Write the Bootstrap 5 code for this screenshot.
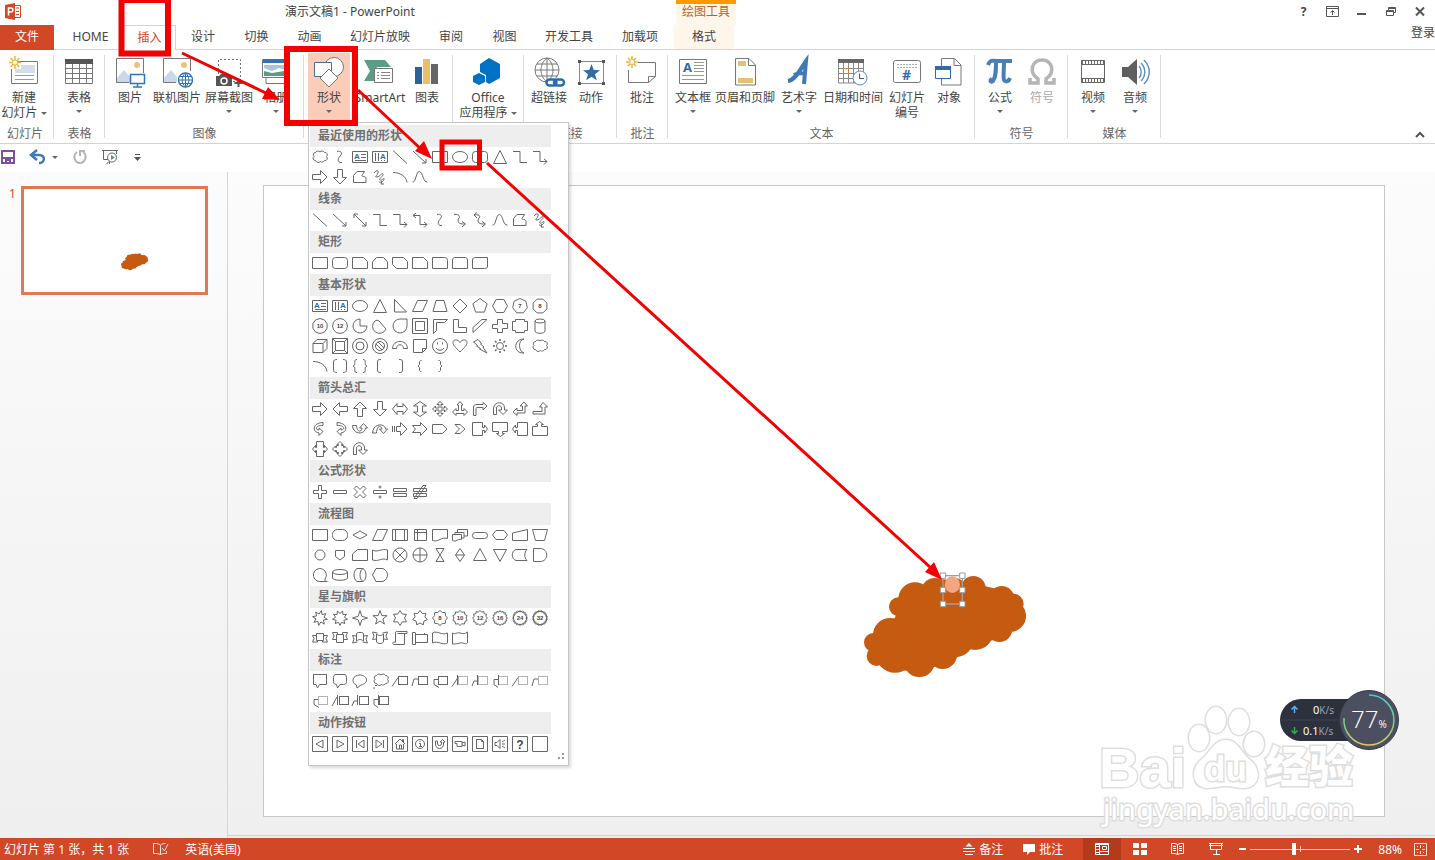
<!DOCTYPE html>
<html lang="zh-CN">
<head>
<meta charset="utf-8">
<meta name="viewport" content="width=device-width, initial-scale=1">
<title>演示文稿1 - PowerPoint</title>
<link href="https://cdn.jsdelivr.net/npm/bootstrap@5.3.0/dist/css/bootstrap.min.css" rel="stylesheet">
<style>
:root{--brand:#d24726;--line:#d4d4d4;--ink:#444}
body{font:12px/15px "Noto Sans","Noto Sans CJK SC",sans-serif;color:var(--ink);background:#fff;overflow:hidden}
button,.tab-link,.plain-link{font:inherit;color:inherit;background:none;border:0;padding:0;text-decoration:none}
svg{display:block;fill:none;overflow:visible}
.title-row{height:25px;padding-bottom:2px}
.app-logo{position:absolute;left:5px;top:3px}
.doc-title{padding-left:285px}
.ctx-head{width:60px;left:676px;background:#fef6ea;border-top:4px solid #fe9a00;color:#b8651b}
.win-set{margin-right:1px}
.win-btn{display:grid;place-items:center;width:29px;height:23px}
.tab-row{height:25px;border-bottom:1px solid var(--line)}
.tab-link{display:flex;align-items:center;justify-content:center;height:24px;padding-bottom:2px}
.tab-file{width:54px;height:25px;background:var(--brand);color:#fff}
.w-53{width:53px}.w-54{width:54px}.w-66{width:66px}.w-69{width:69px}.w-76{width:76px}.w-88{width:88px}
.tab-on{height:25px;background:#fff;border:1px solid var(--line);border-bottom:0;color:var(--brand)}
.tab-ctx{width:60px;margin-left:1px;background:#fef6ea}
.ribbon{height:94px;border-bottom:1px solid var(--line)}
.rgroup{position:relative;padding:3px 4px 0;height:91px}
.rgroup::after{content:"";position:absolute;right:0;top:5px;bottom:3px;width:1px;background:#dcdcdc}
.rlabel{color:#666;text-align:center}
.rbtn{display:flex;flex-direction:column;align-items:center;height:70px;padding-top:3px;white-space:nowrap;position:relative}
.rbtn svg{width:32px;height:32px;margin-bottom:2px;flex:none}
.i-38{width:38px}.i-42{width:42px}.i-46{width:46px}.i-48{width:48px}.i-52{width:52px}.i-62{width:62px}
.g-51{width:51px}.g-54{width:54px}.g-71{width:71px}.g-93{width:93px}.g-149{width:149px}.g-199{width:199px}.g-307{width:307px}
.dimmed{color:#aaa}
.caret{display:inline-block;border:3px solid transparent;border-top-color:#666;border-bottom:0;vertical-align:middle}
.caret-row{height:15px;line-height:12px}
.pressed{background:#fbcdb8}
.shape-menu{position:absolute;left:0;top:69px;width:261px;z-index:20;background:#fff;border:1px solid #c6c6c6;box-shadow:2px 2px 3px rgba(0,0,0,.15);padding:2px 17px 10px 1px;line-height:20px}
.menu-head{font-size:12px;font-weight:700;line-height:22px;height:22px;margin:0;padding-left:8px;background:#eee;color:#707070}
.menu-grid{display:grid;grid-template-columns:repeat(12,20px);grid-auto-rows:20px;padding-bottom:1px}
.menu-grid button{display:grid;place-items:center}
.menu-grid svg{width:16px;height:16px;stroke:#666;stroke-width:1}
.menu-grid text{stroke:none;fill:#444;font:700 6px "Liberation Sans",sans-serif;text-anchor:middle}
.menu-grid text.ltr{fill:#2e6da4;font-size:8px}
.menu-grid text.big{font-size:12px}
.quick{height:28px;padding-bottom:2px}
.work{background:linear-gradient(#fcfcfc,#efefef)}
.thumbs{width:228px;border-right:1px solid #d6d6d6;padding:14px 19px 0 9px;color:var(--brand)}
.thumb{width:187px;height:109px;border:3px solid #e2784f;background:#fff;position:relative}
.stage{padding:13px 50px 21px 35px}
.stage::after{content:"";position:absolute;left:0;right:0;bottom:2px;height:1px;background:#d0d0d0}
.slide{background:#fff;border:1px solid #c8c8c8}
.blob{position:absolute;left:51.4%;top:57.8%;width:210px;height:150px}
.thumb .blob{width:35px;height:25px}
.wmark{position:absolute;right:60px;bottom:8px;width:280px;height:130px;z-index:3;fill:#fff;stroke:#dedede;stroke-width:3;paint-order:stroke}
.meter{position:absolute;right:36px;bottom:88px;width:120px;height:60px;z-index:4}
.status{height:22px;background:var(--brand);color:#fff}
.view-btn{width:38px;height:22px;display:grid;place-items:center}
.view-on{background:#b5391b}
.st-gap{margin-right:20px}
.zoomer{appearance:none;width:100px;height:22px;margin:0;background:linear-gradient(#f6cfc3,#f6cfc3) center/100% 1px no-repeat,linear-gradient(#f6cfc3,#f6cfc3) center/1px 6px no-repeat}
.zoomer::-webkit-slider-thumb{appearance:none;width:4px;height:12px;background:#fff}
.marks{position:absolute;left:0;top:0;width:1435px;height:860px;z-index:40;pointer-events:none}
</style>
</head>
<body class="d-flex flex-column vh-100 position-relative">

<header>
  <div class="title-row d-flex align-items-center position-relative">
    <svg class="app-logo" width="16" height="17" viewBox="0 0 16 17"><path d="M0 2L10 0v17L0 15z" fill="#d24726"/><path d="M10 2.500h5.500v12H10" stroke="#d24726"/><path d="M11 5h3M11 8.500h3M11 11.500h3" stroke="#d24726"/><path d="M3.500 12.500V5H6c2.500 0 2.500 4 0 4H4" stroke="#fff" stroke-width="1.600"/></svg>
    <span class="doc-title">演示文稿1 - PowerPoint</span>
    <span class="ctx-head position-absolute top-0 h-100 text-center">绘图工具</span>
    <div class="win-set d-flex ms-auto">
      <button class="win-btn fw-bold" aria-label="帮助">?</button>
      <button class="win-btn" aria-label="功能区选项"><svg width="13" height="11" stroke="#555"><path d="M.5.500h12v10H.5zM.5 2.500h12M6.500 9V4.500M4.500 6.500l2-2 2 2"/></svg></button>
      <button class="win-btn" aria-label="最小化"><svg width="9" height="8"><path d="M0 6h9" stroke="#555" stroke-width="2"/></svg></button>
      <button class="win-btn" aria-label="还原"><svg width="10" height="9" stroke="#555"><path d="M.5 3.500h7v5h-7zM.5 4.500h7M2.500 3V.5h7v5H8M2.500 1.500h7"/></svg></button>
      <button class="win-btn" aria-label="关闭"><svg width="10" height="9" stroke="#555" stroke-width="2"><path d="M1 .500l8 8M9 .500l-8 8"/></svg></button>
    </div>
  </div>
  <nav class="tab-row d-flex">
    <a href="#" class="tab-link tab-file">文件</a>
    <a href="#" class="tab-link w-69 ps-1">HOME</a>
    <a href="#" class="tab-link tab-on w-53">插入</a>
    <a href="#" class="tab-link w-54">设计</a>
    <a href="#" class="tab-link w-53">切换</a>
    <a href="#" class="tab-link w-53">动画</a>
    <a href="#" class="tab-link w-88">幻灯片放映</a>
    <a href="#" class="tab-link w-54">审阅</a>
    <a href="#" class="tab-link w-53">视图</a>
    <a href="#" class="tab-link w-76">开发工具</a>
    <a href="#" class="tab-link w-66">加载项</a>
    <a href="#" class="tab-link tab-ctx">格式</a>
    <a href="#" class="plain-link ms-auto text-nowrap">登录</a>
  </nav>

  <div class="ribbon d-flex">
    <section class="rgroup g-54 d-flex flex-column justify-content-between px-0">
      <div><button class="rbtn i-48"><svg viewBox="0 0 32 32"><path d="M9 5.500h20.500v22h-26V13" stroke="#777"/><path d="M13 9h14v8H7v-4h6z" fill="#d5dde8"/><path d="M7 19.500h19M7 23.500h19" stroke="#999"/><path d="M7 0v13M1 6.500h12M2.500 2l9 9M11.500 2l-9 9" stroke="#eab839" stroke-width="1.500"/><circle cx="7" cy="6.500" r="2.500" fill="#fff" stroke="#eab839"/></svg><span>新建</span><span>幻灯片 <i class="caret"></i></span></button></div>
      <div class="rlabel pe-1">幻灯片</div>
    </section>
    <section class="rgroup g-51 d-flex flex-column justify-content-between">
      <div class="d-flex"><button class="rbtn i-42"><svg viewBox="0 0 32 32"><path d="M2 3h28v5H2z" fill="#555"/><path d="M2.500 8v19.500h27V8M2.500 12.500h27M2.500 17.500h27M2.500 22.500h27M9.500 8v19M16.500 8v19M23.500 8v19" stroke="#777"/></svg><span>表格</span><span class="caret-row"><i class="caret"></i></span></button></div>
      <div class="rlabel">表格</div>
    </section>
    <section class="rgroup g-199 d-flex flex-column justify-content-between">
      <div class="d-flex">
        <button class="rbtn i-42"><svg viewBox="0 0 32 32"><path d="M15 26.500H2.500v-24h27V17" stroke="#777"/><circle cx="23" cy="9" r="3" fill="#e8c57b"/><path d="M3 26V22l7-8 6 7v5z" fill="#c9d8ea"/><path d="M16.500 18.500h14v9h-14z" fill="#fff" stroke="#2f75b5" stroke-width="1.500"/><path d="M19 31h9M23.500 28v3" stroke="#2f75b5" stroke-width="1.500"/></svg><span>图片</span></button>
        <button class="rbtn i-52"><svg viewBox="0 0 32 32"><path d="M15 26.500H2.500v-24h27V15" stroke="#777"/><circle cx="23" cy="9" r="3" fill="#e8c57b"/><path d="M3 26V22l7-8 6 7v5z" fill="#c9d8ea"/><circle cx="24.500" cy="24" r="7" fill="#fff" stroke="#2f75b5" stroke-width="1.400"/><path d="M17.500 24h14M24.500 17v14M19 20.500h11M19 27.500h11M24.500 17c-4.500 4-4.500 10 0 14M24.500 17c4.500 4 4.500 10 0 14" stroke="#2f75b5"/></svg><span>联机图片</span></button>
        <button class="rbtn i-52"><svg viewBox="0 0 32 32"><path d="M5.500 18V3.500h22v22H19" stroke="#777" stroke-dasharray="2 2"/><path d="M3 20h3l2-2h6l2 2h3v10H3z" fill="#555"/><circle cx="11" cy="25" r="3" stroke="#fff" stroke-width="1.500"/><path d="M25.500 23v8M21.500 27h8" stroke="#555" stroke-width="2"/></svg><span>屏幕截图</span><span class="caret-row"><i class="caret"></i></span></button>
        <button class="rbtn i-42"><svg viewBox="0 0 32 32"><path d="M6 22v5.500h23.500V8H26" stroke="#777" fill="#fff"/><path d="M2.500 3.500h24v18h-24z" fill="#fff" stroke="#777"/><path d="M3 3h23v4H3z" fill="#2f75b5"/><path d="M4 9h21v5l-6-2-7 3-8-3z" fill="#a6c6e4"/><path d="M4 20v-5l8 2 12-2v5z" fill="#5c9c86"/></svg><span>相册</span><span class="caret-row"><i class="caret"></i></span></button>
      </div>
      <div class="rlabel">图像</div>
    </section>
    <section class="rgroup g-149 d-flex flex-column" aria-label="插图">
      <div class="d-flex">
        <div class="position-relative">
          <button class="rbtn pressed i-42" aria-expanded="true"><svg viewBox="0 0 32 32"><circle cx="21" cy="11" r="9.500" fill="#fff" stroke="#777"/><path d="M1.500 6.500h17v14h-17z" fill="#fff" stroke="#4a6f9c"/><path d="M16 13l9 9-9 9-9-9z" fill="#fff" stroke="#777"/></svg><span>形状</span><span class="caret-row"><i class="caret"></i></span></button>
          <div class="shape-menu" id="shapeMenu"></div>
        </div>
        <button class="rbtn i-52 ms-1"><svg viewBox="0 0 32 32"><path d="M0 4h21l6 7h-14l-3 7v7H0l6-10z" fill="#5c9c86"/><path d="M10.500 12.500h18v14h-18z" fill="#fff" stroke="#777"/><path d="M13 16.500h2M17 16.500h9M13 19.500h2M17 19.500h9M13 22.500h2M17 22.500h9" stroke="#888"/></svg><span>SmartArt</span></button>
        <button class="rbtn i-42"><svg viewBox="0 0 32 32"><path d="M4 11h7v17H4z" fill="#2f6196"/><path d="M12 3h7v25h-7z" fill="#e8bf6a"/><path d="M20 8h7v20h-7z" fill="#666"/></svg><span>图表</span></button>
      </div>
    </section>
    <section class="rgroup g-71 d-flex flex-column" aria-label="应用程序">
      <div class="d-flex"><button class="rbtn i-62"><svg viewBox="0 0 32 32"><path d="M17 2l11 6v14l-11 6-3-2v-7l-6-3V8z" fill="#0072c6"/><path d="M7 17l6 3v6l-6 3-6-3v-6z" fill="#0072c6"/></svg><span>Office</span><span>应用程序 <i class="caret"></i></span></button></div>
    </section>
    <section class="rgroup g-93 d-flex flex-column justify-content-between">
      <div class="d-flex">
        <button class="rbtn i-42"><svg viewBox="0 0 32 32"><g stroke="#777"><circle cx="14" cy="14" r="12"/><path d="M2 14h24M14 2v24M4 8h20M4 20h20M14 2C6 8 6 20 14 26M14 2c8 6 8 18 0 24"/></g><path d="M15 22.500h14v7H15z" fill="#fff"/><rect x="13.500" y="23.500" width="10" height="6" rx="3" stroke="#2f6ca8" stroke-width="2.500"/><rect x="21" y="23.500" width="10" height="6" rx="3" stroke="#2f6ca8" stroke-width="2.500"/></svg><span>超链接</span></button>
        <button class="rbtn i-42"><svg viewBox="0 0 32 32"><path d="M4.500 5.500h24v22h-24z" stroke="#888"/><path d="M3 4h3v3H3zM27 4h3v3h-3zM3 26h3v3H3zM27 26h3v3h-3z" fill="#555"/><path d="M16.500 8l2.300 6 6.200.300-5 3.900 1.800 6-5.300-3.500-5.300 3.500 1.800-6-5-3.900 6.200-.300z" fill="#2f6ca8"/></svg><span>动作</span></button>
      </div>
      <div class="rlabel">链接</div>
    </section>
    <section class="rgroup g-51 d-flex flex-column justify-content-between">
      <div class="d-flex"><button class="rbtn i-42"><svg viewBox="0 0 32 32"><path d="M12 6.500h17.500v14l-7 6h-20V14M29.500 20.500h-7v6" stroke="#777"/><path d="M6 0v12M0 6h12M2 2l8 8M10 2l-8 8" stroke="#eab839" stroke-width="1.500"/><circle cx="6" cy="6" r="2.500" fill="#fff" stroke="#eab839"/></svg><span>批注</span></button></div>
      <div class="rlabel">批注</div>
    </section>
    <section class="rgroup g-307 d-flex flex-column justify-content-between">
      <div class="d-flex">
        <button class="rbtn i-42"><svg viewBox="0 0 32 32"><path d="M2.500 3.500h27v24h-27z" stroke="#777"/><text x="6" y="16" font-size="13" font-weight="700" fill="#2f6ca8">A</text><path d="M17 6.500h10M17 9.500h10M17 12.500h10M17 15.500h10M5 19.500h22M5 23.500h22" stroke="#999"/></svg><span>文本框</span><span class="caret-row"><i class="caret"></i></span></button>
        <button class="rbtn i-62"><svg viewBox="0 0 32 32"><path d="M6.500 2.500H20l6.500 6.500v20h-20zM19.500 3v6.500H26" stroke="#777"/><path d="M9 5h8v5H9zM9 22h15v5H9z" fill="#e5c172"/></svg><span>页眉和页脚</span></button>
        <button class="rbtn i-46"><svg viewBox="0 0 32 32"><path d="M5 25C13 24 18 12 23 5l-2 23M11 19c4-2 8-2 12-1" stroke="#3f78b5" stroke-width="4"/></svg><span>艺术字</span><span class="caret-row"><i class="caret"></i></span></button>
        <button class="rbtn i-62"><svg viewBox="0 0 32 32"><path d="M1 3h26v4H1z" fill="#666"/><path d="M1.500 7v20h25V7M1.500 12.500h25M1.500 17.500h25M1.500 22.500h25M6.500 7v20M11.500 7v20M16.500 7v20M21.500 7v20" stroke="#888"/><path d="M6.500 12.500h5v5h-5z" stroke="#dd7a30"/><circle cx="23" cy="22" r="7" fill="#fff" stroke="#5b8fc0"/><path d="M22.500 17.500v5H27" stroke="#555"/></svg><span>日期和时间</span></button>
        <button class="rbtn i-46"><svg viewBox="0 0 32 32"><rect x="2.500" y="4.500" width="27" height="22" rx="2" stroke="#777"/><path d="M6 8.500h20M6 11.500h20" stroke="#aaa" stroke-dasharray="2 1"/><text x="11" y="24" font-size="14" font-weight="700" fill="#2f6ca8">#</text></svg><span>幻灯片</span><span>编号</span></button>
        <button class="rbtn i-38"><svg viewBox="0 0 32 32"><path d="M8.500 10V2.500h13l6.500 6.500v20H8.500v-6M21 3v6.500h7" stroke="#777"/><path d="M2.500 10.500h15v12h-15z" fill="#fff" stroke="#2f6ca8"/><path d="M2 10h16v4H2z" fill="#2f6ca8"/></svg><span>对象</span></button>
      </div>
      <div class="rlabel">文本</div>
    </section>
    <section class="rgroup g-93 d-flex flex-column justify-content-between">
      <div class="d-flex">
        <button class="rbtn i-42"><svg viewBox="0 0 32 32"><path d="M4 9c2-6 5-4 8-4h16M12 6c0 8 0 15-3 19-3 2-3-1-1-2M20 6c0 8-1 14 0 18 2 3 5 1 6-2" stroke="#4a7fb5" stroke-width="4"/></svg><span>公式</span><span class="caret-row"><i class="caret"></i></span></button>
        <button class="rbtn i-42 dimmed"><svg viewBox="0 0 32 32"><path d="M4 22v5h8v-4c-10-7-6-19 4-19s14 12 4 19v4h8v-5" stroke="#b5b5b5" stroke-width="3.500"/></svg><span>符号</span></button>
      </div>
      <div class="rlabel">符号</div>
    </section>
    <section class="rgroup g-93 d-flex flex-column justify-content-between">
      <div class="d-flex">
        <button class="rbtn i-42"><svg viewBox="0 0 32 32"><path d="M4.500 4.500h23v22h-23zM4.500 8.500h23M4.500 22.500h23" stroke="#666"/><path d="M5 6.500h22M5 24.500h22" stroke="#666" stroke-width="3" stroke-dasharray="1 2"/></svg><span>视频</span><span class="caret-row"><i class="caret"></i></span></button>
        <button class="rbtn i-42"><svg viewBox="0 0 32 32"><path d="M3 11h6l9-8v26l-9-8H3z" fill="#5f5f5f"/><path d="M20 10c3 3 3 9 0 12M22 7c5 5 5 13 0 18M25 4c7 7 7 17 0 24" stroke="#5b8fc0" stroke-width="1.400"/></svg><span>音频</span><span class="caret-row"><i class="caret"></i></span></button>
      </div>
      <div class="rlabel">媒体</div>
    </section>
    <button class="ms-auto me-1 align-self-end pb-1 px-1" aria-label="折叠功能区"><svg width="12" height="8"><path d="M1 6l4-4 4 4" stroke="#555" stroke-width="2"/></svg></button>
  </div>
</header>

<div class="quick d-flex align-items-center gap-3">
  <button aria-label="保存"><svg width="16" height="16"><path d="M2 2h12v12H2zM2 9h12" stroke="#7d4f9e" stroke-width="2"/><path d="M6 14v-3h4v3" stroke="#7d4f9e" stroke-width="2"/></svg></button>
  <button aria-label="撤消"><span class="d-flex align-items-center gap-1"><svg width="16" height="16"><path d="M-1 6h8c7 0 6 8 0 8" stroke="#3f78b5" stroke-width="2.500"/><path d="M5 1L-1 6l6 5" stroke="#3f78b5" stroke-width="2.500"/></svg><i class="caret"></i></span></button>
  <button aria-label="重复"><svg width="12" height="16"><path d="M3 3C-2 7 1 14 6 14S14 6 9 3" stroke="#b4b4b4" stroke-width="2"/><path d="M6 7V2h5" stroke="#b4b4b4" stroke-width="2"/></svg></button>
  <button aria-label="从头开始放映"><svg width="16" height="16" stroke="#666"><path d="M0 1.500h16M1.500 2v8.500H6M14.500 2v3M4 15.500l3-3M7.500 11v4"/><circle cx="10" cy="8.500" r="4.500" fill="#fff"/><path d="M9 6l4 2.500L9 11z" fill="#5c9c86" stroke="none"/></svg></button>
  <button aria-label="自定义快速访问工具栏"><svg width="7" height="8"><path d="M1 1.500h5" stroke="#555"/><path d="M0 4h7L3.500 8z" fill="#555"/></svg></button>
</div>

<main class="work d-flex flex-fill">
  <aside class="thumbs d-flex align-items-start">
    <span>1</span>
    <div class="thumb ms-auto flex-shrink-0"><svg class="blob" viewBox="0 0 630 450"><use href="#cloudBlob"/></svg></div>
  </aside>
  <div class="stage flex-fill d-flex position-relative">
    <div class="slide flex-fill position-relative">
      <svg class="blob" viewBox="0 0 630 450">
        <g id="cloudBlob" fill="#c55a11"><path d="M165 203L180 135 255 103 310 88 437 109 517 128 548 165 515 240 447 275 388 298 352 322 285 350 197 362 120 343 90 300 103 250z"/><circle cx="225" cy="147" r="50"/><circle cx="285" cy="126" r="42"/><circle cx="340" cy="125" r="42"/><circle cx="400" cy="115" r="37"/><circle cx="485" cy="146" r="38"/><circle cx="520" cy="162" r="31"/><circle cx="510" cy="198" r="48"/><circle cx="478" cy="237" r="39"/><circle cx="405" cy="245" r="55"/><circle cx="350" cy="270" r="50"/><circle cx="308" cy="314" r="43"/><circle cx="238" cy="334" r="47"/><circle cx="165" cy="308" r="60"/><circle cx="110" cy="318" r="30"/><circle cx="100" cy="277" r="28"/><circle cx="150" cy="255" r="51"/><circle cx="175" cy="170" r="28"/></g>
        <ellipse cx="337" cy="104" rx="23" ry="25" fill="#f4a582"/>
        <path d="M309 77h58v85h-58z" stroke="#a0a0a0" stroke-width="4"/>
        <g fill="#fff" stroke="#999" stroke-width="3"><path d="M301 69h16v16h-16zM359 69h16v16h-16zM301 112h16v16h-16zM359 112h16v16h-16zM301 154h16v16h-16zM359 154h16v16h-16z"/></g>
      </svg>
    </div>
    <svg class="wmark" viewBox="1095 700 280 130">
      <text x="1099" y="787" font-family="Liberation Sans" font-weight="700" font-size="56">Bai</text>
      <ellipse cx="1199" cy="738" rx="10" ry="13"/><ellipse cx="1216" cy="720" rx="10" ry="13"/><ellipse cx="1239" cy="722" rx="10" ry="13"/><ellipse cx="1254" cy="744" rx="10" ry="12"/>
      <path d="M1226 740c12 0 15 13 24 20 12 9 10 27-5 28-9 0-12-2-19-2s-12 2-20 2c-15-2-15-20-5-28 9-7 13-20 25-20z"/>
      <text x="1204" y="781" font-family="Liberation Sans" font-weight="700" font-size="35">du</text>
      <text x="1265" y="783" font-family="Noto Sans CJK SC" font-weight="900" font-size="44">经验</text>
      <text x="1103" y="820" font-family="Noto Sans" font-size="29">jingyan.baidu.com</text>
    </svg>
    <svg class="meter" viewBox="0 0 120 60">
      <defs><linearGradient id="ring" x2="0" y2="1"><stop stop-color="#4cc8d0"/><stop offset=".6" stop-color="#7fd08a"/><stop offset="1" stop-color="#e0c860"/></linearGradient></defs>
      <path d="M22 9h68v42H22a21 21 0 010-42z" fill="#2c313d"/><path d="M2 30h60" stroke="#3c424f"/>
      <circle cx="90" cy="30" r="29.500" fill="#4b4f60" stroke="#353946"/>
      <path d="M90 5a25 25 0 11-25 23" stroke="url(#ring)" stroke-width="1.500"/>
      <path d="M15.500 23v-6M12.500 19.500l3-3 3 3" stroke="#58b5f0" stroke-width="1.500"/><path d="M15.500 37v6M12.500 40.500l3 3 3-3" stroke="#2fae4a" stroke-width="1.500"/>
      <g font-family="Noto Sans" font-size="11" fill="#fff"><text x="34" y="24">0<tspan fill="#9aa0ab" font-size="10">K/s</tspan></text><text x="24" y="45">0.1<tspan fill="#9aa0ab" font-size="10">K/s</tspan></text></g>
      <text x="72" y="38" font-family="Open Sans" font-weight="300" font-size="24" fill="#fff">77<tspan font-size="10" font-weight="400">%</tspan></text>
    </svg>
  </div>
</main>

<footer class="status d-flex align-items-center text-nowrap">
  <span class="ps-1">幻灯片 第 1 张，共 1 张</span>
  <button class="ms-4" aria-label="拼写检查"><svg width="16" height="14" stroke="#fbe3dc"><path d="M7.500 12.500c-2-1-4-1-7-1V1.500c3 0 5 0 7 1.500v9.500c2-1 3-1 6-1V9M7.500 3c1-1 3-1.500 5-1.500M9 6l2.500 3L15 2"/></svg></button>
  <button class="ms-3">英语(美国)</button>
  <div class="d-flex align-items-center ms-auto">
    <button class="st-gap d-flex align-items-center gap-1"><svg width="12" height="14" stroke="#fff"><path d="M0 6.500h12M0 9.500h12M2 12.500h8"/><path d="M2.500 4.500L6 1l3.500 3.500z" fill="#fff" stroke="none"/></svg>备注</button>
    <button class="st-gap d-flex align-items-center gap-1"><svg width="12" height="12"><path d="M0 1h12v8H7l-3 3V9H0z" fill="#fff"/></svg>批注</button>
    <button class="view-btn view-on" aria-label="普通视图"><svg width="14" height="13" stroke="#fff"><path d="M.5.500h13v11H.5zM4.500 0v12M7.500 3.500h4v3h-4zM5 8.500h8M0 1.500h14"/><path d="M1 3.500h3M1 6.500h3M1 9.500h3"/></svg></button>
    <button class="view-btn" aria-label="幻灯片浏览"><svg width="14" height="12"><path d="M0 0h6v5H0zM8 0h6v5H8zM0 7h6v5H0zM8 7h6v5H8z" fill="#fff"/></svg></button>
    <button class="view-btn" aria-label="阅读视图"><svg width="14" height="12" stroke="#fff"><path d="M6.500 11.500V1.500L4 .5H.5v10H4l2.500 1 2.500-1h3.500V.5H9l-2.500 1M2 3.500h3M2 5.500h3M2 7.500h3M8 3.500h3M8 5.500h3M8 7.500h3"/></svg></button>
    <button class="view-btn" aria-label="幻灯片放映"><svg width="14" height="12" stroke="#fff"><path d="M0 .500h14M1.500 1v5.500h11V1M0 2.500h14M7.500 7v4M4 11.500h7"/></svg></button>
    <button class="px-1" aria-label="缩小"><svg width="7" height="8"><path d="M0 4h7" stroke="#fff" stroke-width="2"/></svg></button>
    <input class="zoomer" type="range" min="0" max="100" value="43" aria-label="显示比例">
    <button class="px-1" aria-label="放大"><svg width="8" height="8"><path d="M0 4h8M4 0v8" stroke="#fff" stroke-width="2"/></svg></button>
    <button class="px-2 ms-1 me-1">88%</button>
    <button class="me-2" aria-label="使幻灯片适应当前窗口"><svg width="13" height="13" stroke="#fbe3dc"><path d="M.5.500h12v12H.5zM6.500 2v3M6.500 8v3M2 6.500h3M8 6.500h3M3 3l1 1M10 3L9 4M3 10l1-1M10 10L9 9"/></svg></button>
  </div>
</footer>

<svg class="marks" viewBox="0 0 1435 860" aria-hidden="true">
  <g stroke="#f40000" stroke-width="6"><path d="M121.500 0h46.500v53.500h-46.500z"/><path d="M287 49h68v74h-68z"/><path d="M442 142h37.500v26H442z" stroke-width="5"/></g>
  <g stroke="#f40000" stroke-width="3"><path d="M182 53l86 41M358 90l64 60M487 163l444 405"/></g>
  <g fill="#f40000"><path d="M280 100l-18-1 6-12zM432 159l-17-8 9-10zM942 580l-17-8 9-10z"/></g>
</svg>

<script src="https://cdn.jsdelivr.net/npm/bootstrap@5.3.0/dist/js/bootstrap.bundle.min.js"></script>
<script>
// Shape gallery: every entry is path data on a 16 x 16 grid, or markup when it starts with "<".
const P = d => `<path d="${d}"/>`;
const ring = (n, r, r2, rot = -90, sy = 1) => {
  const k = r2 ? n * 2 : n, pts = [];
  for (let i = 0; i < k; i++) {
    const a = (rot + i * 360 / k) * Math.PI / 180, q = r2 && i % 2 ? r2 : r;
    pts.push((8 + q * Math.cos(a)).toFixed(1) + ' ' + (8 + q * sy * Math.sin(a)).toFixed(1));
  }
  return 'M' + pts.join('L') + 'Z';
};
const num = (d, t) => P(d) + `<text x="8" y="10.200">${t}</text>`;
const S = {
  cloud: 'M3.500 11.500A2.200 2.200 0 012 7.500 2.300 2.300 0 013.500 3.500 2.800 2.800 0 018 3 2.800 2.800 0 0112.500 3.500 2.300 2.300 0 0114.500 7.500 2.300 2.300 0 0112.500 11.500 2.600 2.600 0 018.500 12.500 3 3 0 013.500 11.500Z',
  s: 'M5 2.500C9 1.500 10.500 4 9 6L7 8.500C5 12 7 14 10 13.500',
  sA: 'M2 2.500C6 1.500 8.500 4 7 6L6 8C6 12 9 12 13 12M10 9.500l3.500 2.500-3.500 3',
  sAA: 'M5 .5L2 3l3 3M2 3C7 2 9 4 7 6L6 8C6 12 9 12 13 12M10 9.500l3.500 2.500-3.500 3',
  txt: P('M.5 2.500h15v11H.5zM9 5.500h5M9 8.500h5M3 11.500h11') + '<text class="ltr" x="5" y="10">A</text>',
  vtx: P('M.5 2.500h15v11H.5zM3.500 4v8M6.500 4v8M9.500 11v1M12.500 11v1') + '<text class="ltr" x="11" y="10">A</text>',
  line: 'M1 1.500L15 14.500', arrow: 'M1 2L14 14M14 10v4h-4', arrow2: 'M2 2L14 14M14 10v4h-4M2 6V2h4',
  rect: 'M.5 2.500h15v11H.5z', oval: '<ellipse cx="8" cy="8" rx="7.500" ry="5.500"/>',
  rr: '<rect x=".5" y="2.500" width="15" height="11" rx="3"/>',
  tri: 'M8 1.500L14.500 14.500H1.500Z', el: 'M1 2.500h7v11h7', elA: 'M1 2.500h7v10h7M12 10l3 2.500-3 3',
  elAA: 'M4 1L1 3.500 4 6M1 3.500h7v9h7M12 10l3 2.500-3 3',
  ra: 'M.5 5.500h8v-4L15 8l-6.500 6.500v-4h-8z', la: 'M15.500 5.500h-8v-4L1 8l6.500 6.500v-4h8z',
  da: 'M5.500 .5h5v8h4L8 15 1.500 8.500h4z', ua: 'M5.500 15.500h5v-8h4L8 1 1.500 7.500h4z',
  free: 'M1.500 13.500v-7L5 2.500h7.500L10 6.500c0 2 4 0 4 3v4z',
  scr: 'M2 4c2-3 5-3 4 0S2 8 5 8s5-5 6-3-5 5-3 6 4-3 4-1-3 4-5 3M10 12l-1 3 3 0',
  arc: 'M1 3.500C8 3.500 14 7 15 13.500', curve: 'M.5 13C4 14 4 2 7.500 2.500S11 14 15.500 13',
  s1: 'M.5 2.500h11l4 4v7H.5z', s2: 'M.5 7l4-4.500h7L15.500 7v6.500H.5z', s3: 'M.5 2.500h11l4 4v7h-11l-4-4z',
  r2: 'M.5 5C.5 3 2 2.500 3 2.500h10c1 0 2.500.500 2.500 2.500v8.500H.5z', r3: 'M.5 5C.5 3 2 2.500 4 2.500h11.500V11c0 2-1 2.500-3 2.500H.5z',
  r1: 'M.5 2.500h12c2 0 3 1 3 3v8H.5z',
  rt: 'M2.500 1.500v12.500h12z', para: 'M5.500 2.500h10L10.500 13.500H.5z', trap: 'M4 2.500h8L15 13.500H1z',
  dia: 'M8 1L15 8 8 15 1 8z'
};
const braceL = 'M5 1.500C1.500 1.500 3.500 5 2.500 7L1 8l1.500 1C3.500 11 1.500 14.500 5 14.500';
const braceR = 'M11 1.500c3.500 0 1.500 3.500 2.500 5.500L15 8l-1.500 1c-1 2 1 5.500-2.500 5.500';
const note = (x, dash, a) => P(a) + `<rect x="${x}" y="3.500" width="9" height="8"${dash ? ' stroke-dasharray="1 1"' : ''}/>`;
const box = d => P('M.5.500h15v15H.5z') + (d[0] === '<' ? d : P(d));
const c1 = 'M0 13.500L6 4.500', c2 = 'M0 13l2-7h4', c3 = 'M7 14.500l-5-3v-5h4', c4 = 'M0 13L5 4M5.500 2v10', c5 = 'M0 13l2-5h3M5.500 2v10', c6 = 'M6 14.500l-4-3v-5h4M6.500 2v10';
const gallery = [
 ['最近使用的形状', [S.cloud,S.s,S.txt,S.vtx,S.line,S.arrow,S.rect,S.oval,S.rr,S.tri,S.el,S.elA,S.ra,S.da,S.free,S.scr,S.arc,S.curve]],
 ['线条', [S.line,S.arrow,S.arrow2,S.el,S.elA,S.elAA,S.s,S.sA,S.sAA,S.curve,S.free,S.scr]],
 ['矩形', [S.rect,S.rr,S.s1,S.s2,S.s3,S.s1,S.r1,S.r2,S.r3]],
 ['基本形状', [S.txt,S.vtx,S.oval,S.tri,S.rt,S.para,S.trap,S.dia,ring(5,7.5),ring(6,7.5,0,0),num(ring(7,7.5),7),num(ring(8,7.5,0,22.5),8),
   num(ring(10,7.5),10),num(ring(12,7.5),12),'M8 1A7 7 0 1015 8H8z','M3 3A7 7 0 1014 11L7 3C6 2 4 2 3 3z','M15 1H8a7 7 0 107 7z','M.5.500h15v15H.5zM3.500 3.500h9v9h-9z','M1.500 1.500h14l-3 3h-8v8l-3 3z','M1.500 1.500h5v8h8v5h-13z','M10 1.500h5L1 14.500v-5z','M5.500 1.500h5v4h5v5h-5v4h-5v-4h-5v-4h5z','M3.500 1.500h9v2h3v9h-3v2h-9v-2h-3v-9h3z','<ellipse cx="8" cy="3" rx="5" ry="2"/><path d="M3 3v10c0 3 10 3 10 0V3"/>',
   'M1 5.500l4-4h10v9l-4 4H1zM1 5.500h10v9M11 5.500l4-4','M.5.500h15v15H.5zM3.500 3.500h9v9h-9zM.5.500l3 3M15.500.500l-3 3M.5 15.500l3-3M15.500 15.500l-3-3','<circle cx="8" cy="8" r="7.500"/><circle cx="8" cy="8" r="4"/>','<circle cx="8" cy="8" r="7.500"/><circle cx="8" cy="8" r="4.500"/><path d="M4 6l6 6M6 4l6 6"/>','M.5 10.500C1 1 15 1 15.500 10.500h-4c0-5-7-5-7 0z','M1.500 1.500h13v9l-4 4h-9zM14.500 10.500h-4v4','<circle cx="8" cy="8" r="7.500"/><path d="M4 10c2 3 6 3 8 0M5.500 4.500v2M10.500 4.500v2"/>','M8 14C3 9 1 7 1 4.500 1 1 6 1 8 4.500 10 1 15 1 15 4.500 15 7 13 9 8 14z','M1.500 4L6 1.500l3.500 4-1 .5 3.500 3-1 .5L15 15 7.500 11l1-.5L4.500 8l1-.5z','<circle cx="8" cy="8" r="3.500"/><path d="M8 1v2M8 13v2M1 8h2M13 8h2M3 3l1.500 1.500M11.500 11.500L13 13M13 3l-1.500 1.500M4.500 11.500L3 13" stroke-width="1.500"/>','M12 1C6 2 6 13 12 15 1 16 1 1 12 1z',S.cloud,
   S.arc,'M5 1.500C3 1.500 1.500 2 1.500 4v8c0 2 1.500 2.500 3.500 2.500M11 1.500c2 0 3.500.500 3.500 2.500v8c0 2-1.500 2.500-3.500 2.500',braceL+braceR,'M9 1.500C6 1.500 5.500 2 5.500 4v8c0 2 .5 2.500 3.500 2.500','M7 1.500c3 0 3.500.500 3.500 2.500v8c0 2-.5 2.500-3.500 2.500','M9.500 2.500h-1l-1 1v3L6 8l1.500 1.500v3l1 1h1','M6.500 2.500h1l1 1v3L10 8 8.500 9.500v3l-1 1h-1']],
 ['箭头总汇', [S.ra,S.la,S.ua,S.da,'M5 2.500v3h6v-3L15.500 8 11 13.500v-3H5v3L.5 8z','M5.500 5H1.500L8 .5 14.500 5h-4v6h4L8 15.500 1.500 11h4z','M8 .5l3 3H9V7h3.500V5l3 3-3 3V9H9v3.500h2l-3 3-3-3h2V9H3.500v2l-3-3 3-3v2H7V3.500H5z','M8 .5L11 4H9.500v5.500H12V7.500L15.500 11 12 14.500v-2H4v2L.5 11 4 7.500v2h2.500V4H5z','M1.500 14.500V6C2 4 3 3.500 5 3.500h6v-2L15 5l-4 4V6.500H5c-1 0-1 1-1 1v7z','M1.500 13.500V7c1-7 11-7 11 0v2h3L11 13.500 6.500 9h3V7c0-3-5-3-5 0v6.500z','M1 11l4-4v2.500h5.500V5H8l4-4 3.500 4H13v7H5v2.500z','M1 10.500h9V6H7.500L11 1.500 15.500 6H13v7H1z',
   'M11 1.500C0 2 0 11 7 12v2.500l4-4L7 7v2C3 9 3 4 11 4.500z','M5 1.500C16 2 16 11 9 12v2.500l-4-4L9 7v2c4 0 4-5-4-4.500z','M.5 4.500C1 14 13 14 13.500 7H15.500L11.500 2.500 7.500 7H10c0 4-5 5-5.500-2.500z','M.5 12C1 2 13 2 13.500 8h2l-4 4.500L7.500 8H10C9 4 5 4 4.500 12z','M.5 5v6M2.500 5v6M4.500 5.500h4v-4L15 8 8.500 14.500v-4h-4z','M.5 4.500h8v-3L15 8l-6.500 6.500v-3h-8L3.500 8z','M.5 3.500h10L15 8l-4.500 4.500H.5z','M3 3.500h5L13 8l-5 4.500H3L7.500 8z','M.5 1.500h10V6.500h2V4l3 4-3 4V9.500h-2v5H.5z','M.5 1.500h15v9h-5v2h2L8.500 15.500l-4-3h2v-2h-6z','M15.500 1.500h-10v5h-2V4L.5 8l3 4V9.500h2v5h10z','M.5 14.500v-9h5v-2h-2L7.500.5l4 3h-2v2h6v9z',
   'M4.500 .5h7v6h1V4.500L15.500 8l-3 3.500v-2h-1v6h-7v-6h-1v2L.5 8l3-3.500v2h1z','M4.500 4.500h2v-1H5L8 .5l3 3H9.500v1h2v2h1V5l3 3-3 3V9.500h-1v2h-2v1H11l-3 3-3-3h1.500v-1h-2v-2h-1V11L.5 8l3-3v1.500h1z','M1.500 13.500V7c1-7 11-7 11 0v2h3L11 13.500 6.500 9h3V7c0-3-5-3-5 0v6.500z']],
 ['公式形状', ['M6.500 1.500h3v5h5v3h-5v5h-3v-5h-5v-3h5z','M1.500 6.500h13v3h-13z','M4.500 2L8 5.500 11.500 2 14 4.500 10.500 8 14 11.500 11.500 14 8 10.500 4.500 14 2 11.500 5.500 8 2 4.500z','<path d="M1.500 6.500h13v3h-13z"/><circle cx="8" cy="3" r="1"/><circle cx="8" cy="13" r="1"/>','M1.500 4.500h13v3h-13zM1.500 9.500h13v3h-13z','M1.500 4.500h13v3h-13zM1.500 9.500h13v3h-13zM11 1.500h3L5 14.500H2z']],
 ['流程图', [S.rect,'<rect x=".5" y="2.500" width="15" height="11" rx="5"/>','M8 4l7 4-7 4-7-4z',S.para,'M.5 2.500h15v11H.5zM3.500 2.500v11M12.500 2.500v11','M2.500 2.500h12v11h-12zM5.500 2.500v11M2.500 5.500h12','M.5 2.500h15v9c-7-2-8 4-15 2z','M.5 7.500h9v5c-4-1-5 3-9 1zM3 7V5.500h9V11H9.500M5.500 5V2.500h10V9H12','<rect x=".5" y="5.500" width="15" height="6" rx="3"/>','M4 3.500h8L15.500 8 12 12.500H4L.5 8z','M.5 6l15-3.500v11H.5z','M.5 2.500h15l-3 11h-9z',
   '<circle cx="8" cy="8" r="5"/>','M3.500 3.500h9v6L8 13 3.500 9.500z','M.5 7l5-4.500h10v11H.5z','M.5 3c5 3 9-2 15 0v10c-5-3-9 2-15 0z','<circle cx="8" cy="8" r="7"/><path d="M3 3l10 10M13 3L3 13"/>','<circle cx="8" cy="8" r="7"/><path d="M8 1v14M1 8h14"/>','M4 1.500h8l-8 13h8z','M8 1.500L12.500 8 8 14.500 3.500 8zM3.500 8h9','M8 1.500L14.500 13.500H1.500z','M1.500 2.500h13L8 14.500z','M4 2.500h11c-3 3-3 8 0 11H4C-1 12-1 4 4 2.500z','M1.500 1.500H8c9 0 9 13 0 13H1.500z',
   'M15.500 14.500H8A6.500 6.500 0 1113 12v2','<ellipse cx="8" cy="5" rx="7.500" ry="2.500"/><path d="M.5 5v6c0 3 15 3 15 0V5"/>','<path d="M5 1.500h6c4 2 4 11 0 13H5c-4-2-4-11 0-13zM11 1.500c-4 2-4 11 0 13"/>','M4 1.500h7c6 3 6 10 0 13H4L.5 8z']],
 ['星与旗帜', [ring(8,7.5,4,-80),ring(9,7.5,4.5,-70),ring(4,7.5,2.5),ring(5,7.5,3),ring(6,7.5,4.5),ring(7,7.5,5),num(ring(8,7.5,6),8),num(ring(10,7.5,6),10),num(ring(12,7.5,6),12),num(ring(16,7.5,6),16),num(ring(24,7.5,6),24),num(ring(32,7.5,6),32),
   'M4.500 3.500h7v7h-7zM4 5.500H.5L2 8.500.5 12h5v-1.500M12 5.500h3.500L14 8.500l1.500 3.500h-5v-1.500','M4.500 4.500h7v8h-7zM5.500 4V2.500h-5L2 6 .5 9.500H4M10.500 4V2.500h5L14 6l1.500 3.500H12','M4.500 11V3.500C6 2 10 2 11.500 3.500V11C9 9 7 9 4.500 11zM4 6L.5 5.500 2 9l-1.500 4 5-1M12 6l3.500-.5L14 9l1.500 4-5-1','M4.500 4C7 6 9 6 11.500 4v8C10 14 6 14 4.500 12zM4 9L.5 9.500 2 6 .5 2l5 1M12 9l3.500.5L14 6l1.500-4-5 1','M3.500 12V2.500C4 1 5 1.500 6 1.500h9v2H5.500M12.500 4v10.500h-11c-2-2 0-3 2-2','M3.500 4.500h12v8h-12M3.500 3v11.500h-3v-12h3M12.500 4.500V3','M.5 3c5-3 9 3 15 0v10c-5 3-9-3-15 0z','M.5 3c3 2 4-1 7.500 0s5 1 7.500-1v11c-3 2-4-1-7.500 0s-5 1-7.500 1z']],
 ['标注', ['M1.500 1.500h13v10h-7L5.500 15 4 11.500H1.500z','M4 1.500h8c2 0 2.500 1 2.500 3v4c0 2-1 3-3 3H8L5.500 15l-1-3.500c-2 0-3-1-3-3v-4c0-2 1-3 2.500-3z','M5 15l-.5-3C-2 9 1 2 8 2s10 8 1 10z','<path d="'+S.cloud+'" transform="translate(1 -1)"/><path d="M3 12.500h2M1 15h2"/>',note(6.5,0,c1),note(6.5,0,c2),note(6.5,0,c3),note(6.5,1,c1+'M5.500 2v10'),note(6.5,1,c5),note(6.5,1,c6),note(6.5,1,c1),note(6.5,1,c2),note(6.5,1,c3),note(7.5,0,c4),note(7.5,0,c5),note(7.5,0,c6)]],
 ['动作按钮', [box('M11 4v8L4 8z'),box('M5 4v8l7-4z'),box('M12 4v8L6 8zM4.500 4v8'),box('M4 4v8l6-4zM11.500 4v8'),box('M3 8l5-5 5 5M4.500 8v5h7V8M7.500 13V9h2v4M10.500 5V3.500h1V6'),box('<circle cx="8" cy="8" r="4.500"/><path d="M7 7.500h1.500v3M7 10.500h3M8 5v1"/>'),box('M3.500 5v3c0 6 8 6 8 0V6H13L10.500 3.500 8 6h1.500v2c0 2-4 2-4 0V5z'),box('M3 5.500h7v5H5v-3H3zM10 7l3-1v4l-3-1'),box('M4.500 3.500h5l2 2v7h-7zM9.500 3.500v2h2'),box('M3 6.500h2l3-3v9l-3-3H3zM10 6l3-2M10 8h3M10 10l3 2'),box('<text class="big" x="8" y="12.500">?</text>'),box('<g/>')]]
];
document.getElementById('shapeMenu').innerHTML = gallery.map(([name, items]) =>
  `<h2 class="menu-head">${name}</h2><div class="menu-grid">` +
  items.map((d, i) => `<button type="button" aria-label="${name} ${i + 1}"><svg viewBox="0 0 16 16">${d[0] === '<' ? d : P(d)}</svg></button>`).join('') +
  '</div>').join('') +
  '<svg class="position-absolute bottom-0 end-0 m-1" width="8" height="8"><path d="M6 0h2v2H6zM2 4h2v2H2zM6 4h2v2H6z" fill="#999"/></svg>';
</script>
</body>
</html>
